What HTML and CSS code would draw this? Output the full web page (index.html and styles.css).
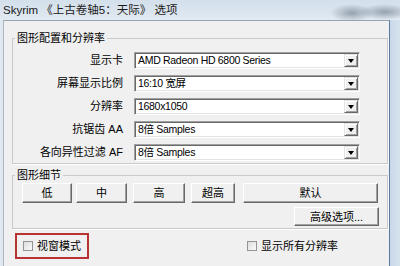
FILE: index.html
```html
<!DOCTYPE html>
<html lang="zh-CN">
<head>
<meta charset="utf-8">
<title>Skyrim 选项</title>
<link rel="stylesheet" href="styles.css">
</head>
<body>
<div class="window">
  <div class="titlebar">
    <span class="title">Skyrim 《上古卷轴5：天际》 选项</span>
  </div>
  <div class="body">
    <div class="frame-left"></div>
    <div class="client">
      <fieldset class="group g1">
        <legend>图形配置和分辨率</legend>
        <div class="rows">
          <label class="lbl">显示卡</label>
          <div class="combo"><span class="val">AMD Radeon HD 6800 Series</span><span class="drop"><i></i></span></div>
          <label class="lbl">屏幕显示比例</label>
          <div class="combo"><span class="val">16:10 宽屏</span><span class="drop"><i></i></span></div>
          <label class="lbl">分辨率</label>
          <div class="combo"><span class="val">1680x1050</span><span class="drop"><i></i></span></div>
          <label class="lbl">抗锯齿 AA</label>
          <div class="combo"><span class="val">8倍 Samples</span><span class="drop"><i></i></span></div>
          <label class="lbl">各向异性过滤 AF</label>
          <div class="combo"><span class="val">8倍 Samples</span><span class="drop"><i></i></span></div>
        </div>
      </fieldset>
      <fieldset class="group g2">
        <legend>图形细节</legend>
        <div class="btnrow">
          <button class="btn b-low">低</button>
          <button class="btn b-mid">中</button>
          <button class="btn b-high">高</button>
          <button class="btn b-ultra">超高</button>
          <button class="btn b-default">默认</button>
        </div>
        <div class="btnrow2">
          <button class="btn b-adv">高级选项...</button>
        </div>
      </fieldset>
      <div class="checks">
        <div class="check windowed"><span class="box"></span><span class="ctext">视窗模式</span></div>
        <div class="check allres"><span class="box"></span><span class="ctext">显示所有分辨率</span></div>
      </div>
    </div>
    <div class="frame-right"></div>
  </div>
</div>
</body>
</html>
```
FILE: styles.css
```css
* { box-sizing: border-box; }
html, body { margin: 0; padding: 0; }
body {
  width: 400px;
  height: 266px;
  overflow: hidden;
  background: #f0f0f0;
  font-family: "Liberation Sans", "Noto Sans CJK SC", sans-serif;
  font-size: 11px;
  color: #000;
}
.window { width: 400px; height: 266px; display: flex; flex-direction: column; }
.titlebar {
  height: 20px;
  flex: none;
  display: flex;
  align-items: center;
  padding-left: 3px;
  background:
    radial-gradient(ellipse 22px 9px at 352px 13px, rgba(90,105,120,0.55), rgba(90,105,120,0) 100%),
    radial-gradient(ellipse 26px 8px at 385px 12px, rgba(80,95,110,0.5), rgba(80,95,110,0) 100%),
    linear-gradient(180deg, #d3dfea 0%, #dbe5ef 55%, #e2eaf2 100%);
}
.title { font-size: 11.5px; line-height: 16px; color: #1a1a1a; white-space: nowrap; }
.body { flex: 1; display: flex; min-height: 0; }
.frame-left { width: 3px; flex: none; background: #dfe7ef; }
.frame-right { width: 10px; flex: none; background: linear-gradient(90deg, #c9d8e8, #d7e2ee); }
.client {
  width: 387px;
  flex: none;
  background: #f0f0f0;
  border-top: 1px solid #97a3b0;
  border-left: 1px solid #aab5c1;
  border-right: 1px solid #5a7aa0;
  padding-left: 8px;
}
.group {
  margin: 0;
  padding: 0;
  min-width: 0;
  width: 376px;
  border: 1px solid #c6cbd0;
  box-shadow: 1px 1px 0 #fff;
}
.group legend {
  margin-left: 2px;
  padding: 0 2px;
  font-size: 11px;
  line-height: 16px;
}
.g1 { margin-top: 9px; padding-top: 6px; padding-bottom: 2px; }
.rows {
  display: grid;
  grid-template-columns: 110px 226px;
  column-gap: 11px;
  row-gap: 6px;
}
.lbl {
  text-align: right;
  height: 17px;
  line-height: 17px;
  white-space: nowrap;
}
.combo {
  height: 17px;
  display: flex;
  align-items: center;
  background: #fff;
  border-top: 1px solid #a0a0a0;
  border-left: 1px solid #a0a0a0;
  border-bottom: 1px solid #fff;
  border-right: 1px solid #fff;
  box-shadow: inset 1px 1px 0 #696969, inset -1px -1px 0 #e3e3e3;
  padding-left: 3px;
}
.val { flex: 1; line-height: 15px; white-space: nowrap; font-size: 10.5px; letter-spacing: -0.3px; }
.drop {
  width: 14px;
  height: 13px;
  margin-right: 1px;
  flex: none;
  background: #f0f0f0;
  border-top: 1px solid #e3e3e3;
  border-left: 1px solid #e3e3e3;
  border-bottom: 1px solid #696969;
  border-right: 1px solid #696969;
  box-shadow: inset 1px 1px 0 #fff, inset -1px -1px 0 #a0a0a0;
  display: flex;
  align-items: center;
  justify-content: center;
}
.drop i {
  width: 0; height: 0;
  border-left: 3px solid transparent;
  border-right: 3px solid transparent;
  border-top: 4px solid #000;
  margin-top: 1px;
}
.g2 { margin-top: 3px; padding-top: 0; padding-bottom: 2px; }
.btnrow { display: flex; height: 20px; padding-left: 9px; }
.btnrow2 { display: flex; height: 19px; margin-top: 4px; padding-left: 281px; }
.btn {
  font-family: "Liberation Sans", "Noto Sans CJK SC", sans-serif;
  font-size: 11px;
  line-height: 14px;
  padding: 0;
  margin: 0;
  color: #000;
  background: #f0f0f0;
  border-top: 1px solid #fff;
  border-left: 1px solid #fff;
  border-bottom: 1px solid #696969;
  border-right: 1px solid #696969;
  box-shadow: inset -1px -1px 0 #a0a0a0;
  height: 100%;
}
.b-low { width: 50px; }
.b-mid { width: 51px; margin-left: 4px; }
.b-high { width: 52px; margin-left: 6px; }
.b-ultra { width: 44px; margin-left: 6px; }
.b-default { width: 135px; margin-left: 8px; }
.b-adv { width: 85px; }
.checks {
  display: flex;
  align-items: center;
  margin-top: 4px;
  height: 26px;
}
.check { display: flex; align-items: center; }
.windowed {
  margin-left: 3px;
  height: 26px;
  width: 74px;
  border: 2px solid #b83232;
  padding-left: 6px;
}
.allres { margin-left: 158px; }
.box {
  width: 10px;
  height: 10px;
  flex: none;
  border: 1px solid #939393;
  background: linear-gradient(135deg, #dcdcdc, #fbfbfb);
}
.ctext { margin-left: 4px; line-height: 14px; white-space: nowrap; }
```
